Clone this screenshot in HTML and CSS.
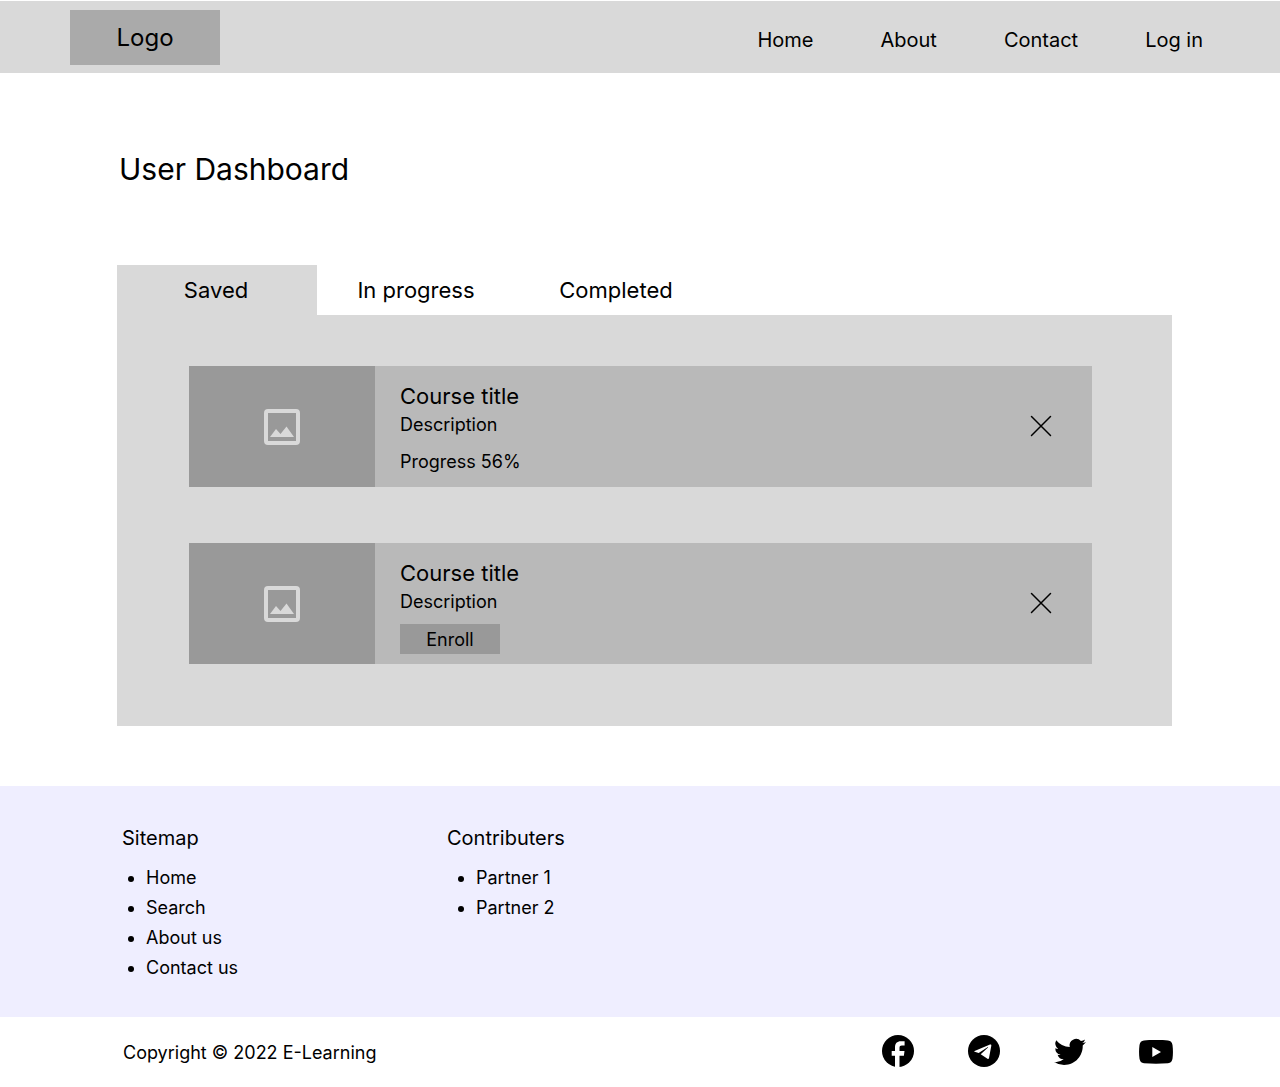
FILE: index.html
```html
<!DOCTYPE html>
<html lang="en">
<head>
  <meta charset="utf-8">
  <meta name="viewport" content="width=device-width, initial-scale=1">
  <title>User Dashboard</title>
  <link rel="stylesheet" href="styles.css">
</head>
<body>
  <header class="site-header">
    <a class="logo" href="#">Logo</a>
    <nav class="site-nav">
      <a href="#">Home</a>
      <a href="#">About</a>
      <a href="#">Contact</a>
      <a href="#">Log in</a>
    </nav>
  </header>

  <main class="dashboard">
    <h1 class="page-title">User Dashboard</h1>
    <div class="tabs" role="tablist">
      <button class="tab tab-active" id="tab-saved" type="button" role="tab" aria-selected="true" aria-controls="panel-saved">Saved</button>
      <button class="tab" type="button" role="tab" aria-selected="false">In progress</button>
      <button class="tab" type="button" role="tab" aria-selected="false">Completed</button>
    </div>
    <section class="panel" id="panel-saved" role="tabpanel" aria-labelledby="tab-saved">
      <article class="course">
        <div class="thumb">
          <svg class="thumb-icon" viewBox="0 0 36 36" aria-hidden="true"><rect x="2" y="2" width="32" height="32" rx="2" fill="none" stroke="currentColor" stroke-width="4"/><path d="M6 28l6-8 4.500 5 6-7.500L30 28z" fill="currentColor"/></svg>
        </div>
        <div class="course-body">
          <h2 class="course-title">Course title</h2>
          <p class="course-text">Description</p>
          <p class="progress">Progress 56%</p>
        </div>
        <button class="remove" type="button" aria-label="Remove course">
          <svg class="remove-icon" viewBox="0 0 22 22" aria-hidden="true"><path d="M1.500 1.500l19 19M20.500 1.500l-19 19" fill="none" stroke="currentColor" stroke-width="1.500" stroke-linecap="round"/></svg>
        </button>
      </article>
      <article class="course">
        <div class="thumb">
          <svg class="thumb-icon" viewBox="0 0 36 36" aria-hidden="true"><rect x="2" y="2" width="32" height="32" rx="2" fill="none" stroke="currentColor" stroke-width="4"/><path d="M6 28l6-8 4.500 5 6-7.500L30 28z" fill="currentColor"/></svg>
        </div>
        <div class="course-body">
          <h2 class="course-title">Course title</h2>
          <p class="course-text">Description</p>
          <button class="enroll" type="button">Enroll</button>
        </div>
        <button class="remove" type="button" aria-label="Remove course">
          <svg class="remove-icon" viewBox="0 0 22 22" aria-hidden="true"><path d="M1.500 1.500l19 19M20.500 1.500l-19 19" fill="none" stroke="currentColor" stroke-width="1.500" stroke-linecap="round"/></svg>
        </button>
      </article>
    </section>
  </main>

  <footer>
    <div class="footer-links">
      <section>
        <h2 class="footer-title">Sitemap</h2>
        <ul class="footer-list">
          <li><a href="#">Home</a></li>
          <li><a href="#">Search</a></li>
          <li><a href="#">About us</a></li>
          <li><a href="#">Contact us</a></li>
        </ul>
      </section>
      <section>
        <h2 class="footer-title">Contributers</h2>
        <ul class="footer-list partners">
          <li>Partner 1</li>
          <li>Partner 2</li>
        </ul>
      </section>
    </div>
    <div class="legal">
      <p class="copyright">Copyright © 2022 E-Learning</p>
      <div class="social">
        <a href="#" aria-label="Facebook"><svg class="social-icon" viewBox="-1 0 34 34" aria-hidden="true"><circle cx="16" cy="16" r="16"/><path fill="#fff" d="M13 32V20.800H9.700V16H13v-3.500C13 8.400 15 6.300 18.800 6.300h3.800v4.300h-2.700c-1.700 0-2.400.8-2.400 2.400v3h5l-.6 4.800h-4.400V32z"/></svg></a>
        <a href="#" aria-label="Telegram"><svg class="social-icon" viewBox="-1 0 34 34" aria-hidden="true"><circle cx="16" cy="16" r="16"/><path fill="#fff" d="M6.600 16L22 9.600c.9-.3 1.500.1 1.300 1.200l-2.300 12.300c-.2.900-.8 1.100-1.500.7L12.700 19.200l7.300-6.800c.3-.3-.1-.4-.5-.2L10.700 18l-4-1.200c-.8-.2-.8-.6-.1-.8z"/></svg></a>
        <a href="#" aria-label="Twitter"><svg class="social-icon" viewBox="-1 0 34 34" aria-hidden="true"><path transform="scale(2)" d="M5.026 15c6.038 0 9.341-5.003 9.341-9.334 0-.14 0-.282-.006-.422A6.685 6.685 0 0 0 16 3.542a6.658 6.658 0 0 1-1.889.518 3.301 3.301 0 0 0 1.447-1.817 6.533 6.533 0 0 1-2.087.793A3.286 3.286 0 0 0 7.875 6.030a9.325 9.325 0 0 1-6.767-3.429 3.289 3.289 0 0 0 1.018 4.382A3.323 3.323 0 0 1 .64 6.575v.045a3.288 3.288 0 0 0 2.632 3.218 3.203 3.203 0 0 1-.865.115 3.230 3.230 0 0 1-.614-.057 3.283 3.283 0 0 0 3.067 2.277A6.588 6.588 0 0 1 .780 13.580a6.320 6.320 0 0 1-.780-.045A9.344 9.344 0 0 0 5.026 15z"/></svg></a>
        <a href="#" aria-label="YouTube"><svg class="social-icon" viewBox="0 0 34 34" aria-hidden="true"><path fill-rule="evenodd" d="M17 5c5 0 9 .1 12 .5 2.700.3 4 1.700 4.500 4.500.6 4.600.6 9.200 0 13.800-.5 2.800-1.800 4.100-4.500 4.400-8 .6-16 .6-24 0-2.700-.3-4-1.600-4.500-4.400-.6-4.600-.6-9.200 0-13.800C1 7.200 2.300 5.800 5 5.500 8 5.100 12 5 17 5zM13.300 12v10l8.700-5z"/></svg></a>
      </div>
    </div>
  </footer>
</body>
</html>
```
FILE: styles.css
```css
* {
  box-sizing: border-box;
}

body {
  margin: 0;
  background: #fff;
  color: #000;
  font-family: Inter, "Liberation Sans", sans-serif;
  font-size: 18px;
  line-height: 30px;
}

h1, h2, p, ul {
  margin: 0;
  font-weight: 400;
}

a {
  color: inherit;
  text-decoration: none;
}

button {
  padding: 0;
  border: 0;
  background: none;
  color: inherit;
  font: inherit;
  cursor: pointer;
}

svg {
  display: block;
}

.site-header {
  display: flex;
  justify-content: space-between;
  padding: 9px 77px 8px 70px;
  border-top: 1px solid #fff;
  background: #d9d9d9;
  background-clip: padding-box;
}

.logo {
  width: 150px;
  background: #aaa;
  font-size: 24px;
  line-height: 55px;
  text-align: center;
}

.site-nav {
  display: flex;
  align-items: center;
  gap: 67px;
  padding-top: 5px;
  font-size: 20px;
}

.dashboard {
  padding: 76px 108px 60px 117px;
}

.page-title {
  padding-left: 2px;
  margin-bottom: 76px;
  font-size: 30px;
  line-height: 40px;
}

.tabs {
  display: flex;
}

.tab {
  width: 200px;
  height: 50px;
  padding-right: 2px;
  font-size: 22px;
}

.tab-active {
  background: #d9d9d9;
}

.panel {
  display: flex;
  flex-direction: column;
  gap: 56px;
  padding: 51px 80px 62px 72px;
  background: #d9d9d9;
}

.course {
  display: flex;
  background: #b9b9b9;
}

.thumb {
  display: flex;
  align-items: center;
  justify-content: center;
  width: 186px;
  background: #999;
  color: #d9d9d9;
}

.thumb-icon {
  width: 36px;
  height: 36px;
}

.course-body {
  flex: 1;
  padding: 15px 25px 10px;
}

.course-title {
  font-size: 22px;
}

.course-text {
  margin-bottom: 8px;
  line-height: 28px;
}

.enroll {
  display: block;
  width: 100px;
  height: 30px;
  padding-top: 1px;
  background: #999;
}

.remove {
  align-self: center;
  margin-right: 40px;
  padding-bottom: 2px;
}

.remove-icon {
  width: 22px;
  height: 22px;
}

.footer-links {
  display: grid;
  grid-template-columns: 325px 1fr;
  padding: 37px 108px 34px 122px;
  background: #efeeff;
}

.footer-title {
  margin-bottom: 10px;
  font-size: 20px;
}

.footer-list {
  padding-left: 24px;
}

.partners {
  padding-left: 29px;
}

.legal {
  display: flex;
  align-items: center;
  justify-content: space-between;
  padding: 18px 107px 18px 123px;
}

.copyright {
  padding-top: 2px;
}

.social {
  display: flex;
  gap: 52px;
}

.social-icon {
  width: 34px;
  height: 34px;
}
```
